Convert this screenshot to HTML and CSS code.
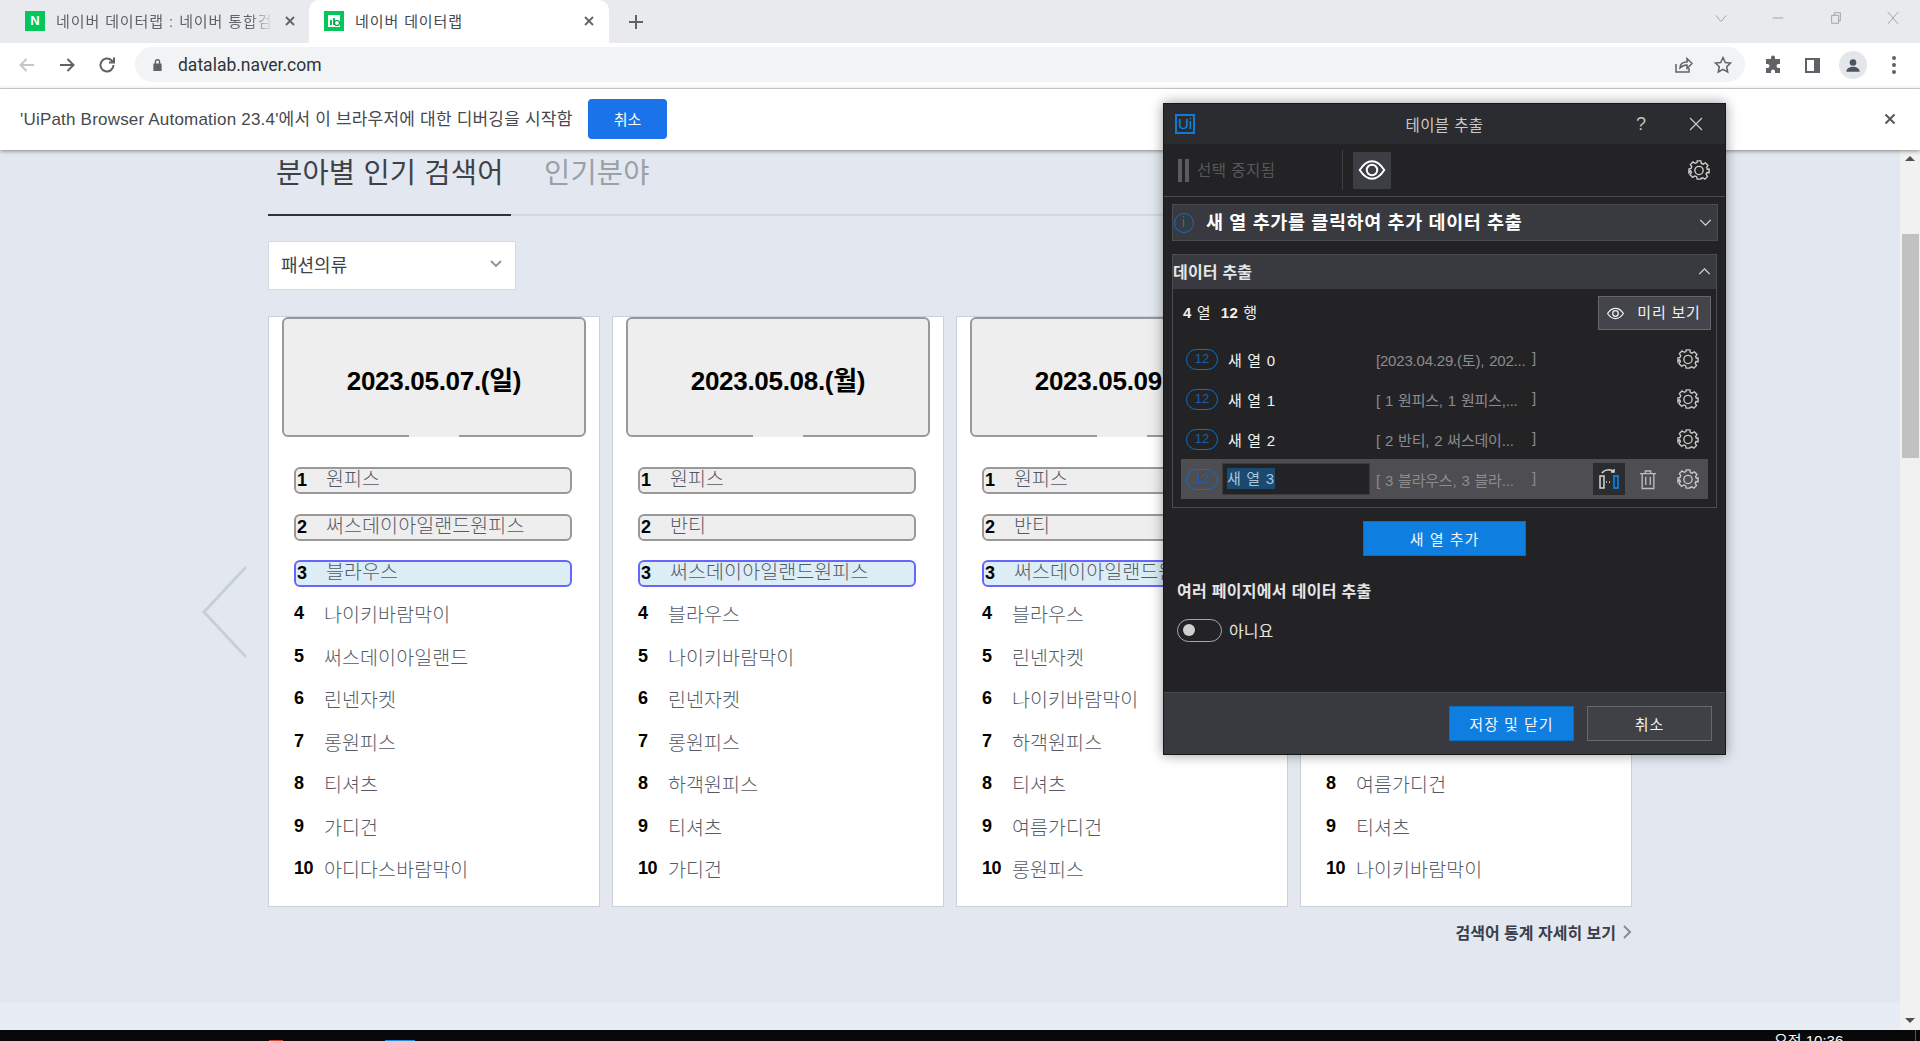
FILE: index.html
```html
<!DOCTYPE html>
<html lang="ko">
<head>
  <meta charset="utf-8" />
  <title>네이버 데이터랩</title>
  <link rel="stylesheet" href="styles.css">
</head>
<body>
  <!-- browser chrome -->
  <div class="tabstrip">
    <div class="tab">
      <span class="favicon fav-n">N</span>
      <span class="tab-title">네이버 데이터랩 : 네이버 통합검색</span>
      <svg class="tab-x" viewBox="0 0 12 12"><path d="M2 2l8 8M10 2l-8 8"/></svg>
    </div>
    <div class="tab tab-active">
      <span class="favicon fav-d"><svg viewBox="0 0 20 20"><rect x="4" y="4" width="12" height="12" fill="#fff"/><rect x="6" y="9" width="2" height="5" fill="#03c75a"/><rect x="9" y="7" width="2" height="7" fill="#03c75a"/><circle cx="13" cy="12" r="2.5" fill="none" stroke="#03a04a" stroke-width="1.2"/></svg></span>
      <span class="tab-title">네이버 데이터랩</span>
      <svg class="tab-x" viewBox="0 0 12 12"><path d="M2 2l8 8M10 2l-8 8"/></svg>
    </div>
    <svg class="new-tab" viewBox="0 0 16 16"><path d="M8 1v14M1 8h14"/></svg>
    <div class="win-btns">
      <svg viewBox="0 0 16 16"><path d="M2 5l6 7 6-7"/></svg>
      <svg viewBox="0 0 16 16"><path d="M2 8h12"/></svg>
      <svg viewBox="0 0 16 16"><path d="M3 5h8v9H3zM6 5V2h7v9h-2"/></svg>
      <svg viewBox="0 0 16 16"><path d="M2 1l12 14M14 1L2 15"/></svg>
    </div>
  </div>

  <div class="toolbar">
    <svg class="tool-ic ic-off" viewBox="0 0 20 20"><path d="M17 10H4M9.500 4L3.500 10l6 6"/></svg>
    <svg class="tool-ic" viewBox="0 0 20 20"><path d="M3 10h13M10.500 4l6 6-6 6"/></svg>
    <svg class="tool-ic" viewBox="0 0 20 20"><path d="M16.500 10a6.500 6.500 0 1 1-2-4.700L17 7.500M17 2.500v5h-5"/></svg>
    <div class="omnibox">
      <svg class="lock" viewBox="0 0 12 16"><path d="M3 7V5a3 3 0 0 1 6 0v2h1.500v8h-9V7zM4.500 7h3V5a1.500 1.500 0 0 0-3 0z" fill-rule="evenodd"/></svg>
      <span class="url">datalab.naver.com</span>
      <svg class="omni-ic" viewBox="0 0 20 20"><path d="M3 9v8h13v-4M7 13c0-4 3-6 7-6V3.500l5 5-5 5V10c-3 0-5 1-7 3z"/></svg>
      <svg class="omni-ic" viewBox="0 0 20 20"><path d="M10 2.500l2.300 5 5.200.600-3.800 3.600 1 5.300-4.700-2.700-4.700 2.700 1-5.300L2.500 8.100l5.200-.600z"/></svg>
    </div>
    <svg class="ext-ic" viewBox="0 0 20 20"><path d="M8 2.500a2 2 0 0 1 4 0V4h5v5h-1.500a2 2 0 0 0 0 4H17v5h-5v-1.500a2 2 0 0 0-4 0V18H3v-5h1.500a2 2 0 0 0 0-4H3V4h5z"/></svg>
    <svg class="ext-ic" viewBox="0 0 20 20"><path fill-rule="evenodd" d="M3 3h15v15H3zM5 5v11h7V5z"/></svg>
    <span class="avatar"><svg viewBox="0 0 24 24"><circle cx="12" cy="9" r="4"/><path d="M4 20c0-4 4-6 8-6s8 2 8 6z"/></svg></span>
    <span class="kebab"><i></i><i></i><i></i></span>
  </div>

  <div class="infobar">
    <span class="info-text">'UiPath Browser Automation 23.4'에서 이 브라우저에 대한 디버깅을 시작함</span>
    <button class="info-cancel">취소</button>
    <svg class="info-x" viewBox="0 0 12 12"><path d="M1.500 1.500l9 9M10.500 1.500l-9 9"/></svg>
  </div>

  <!-- page -->
  <div class="viewport">
    <div class="page">
      <main class="content">
        <nav class="page-tabs">
          <a class="page-tab on">분아별 인기 검색어</a>
          <a class="page-tab">인기분야</a>
        </nav>
        <div class="select">
          <span>패션의류</span>
          <svg viewBox="0 0 12 8"><path d="M1 1l5 5 5-5"/></svg>
        </div>
        <div class="cards">
          <section class="card">
            <div class="date">2023.05.07.(일)</div>
            <ol class="ranks">
              <li class="hit"><b>1</b>원피스</li>
              <li class="hit"><b>2</b>써스데이아일랜드원피스</li>
              <li class="hit now"><b>3</b>블라우스</li>
              <li><b>4</b>나이키바람막이</li>
              <li><b>5</b>써스데이아일랜드</li>
              <li><b>6</b>린넨자켓</li>
              <li><b>7</b>롱원피스</li>
              <li><b>8</b>티셔츠</li>
              <li><b>9</b>가디건</li>
              <li><b>10</b>아디다스바람막이</li>
            </ol>
          </section>
          <section class="card">
            <div class="date">2023.05.08.(월)</div>
            <ol class="ranks">
              <li class="hit"><b>1</b>원피스</li>
              <li class="hit"><b>2</b>반티</li>
              <li class="hit now"><b>3</b>써스데이아일랜드원피스</li>
              <li><b>4</b>블라우스</li>
              <li><b>5</b>나이키바람막이</li>
              <li><b>6</b>린넨자켓</li>
              <li><b>7</b>롱원피스</li>
              <li><b>8</b>하객원피스</li>
              <li><b>9</b>티셔츠</li>
              <li><b>10</b>가디건</li>
            </ol>
          </section>
          <section class="card">
            <div class="date">2023.05.09.(화)</div>
            <ol class="ranks">
              <li class="hit"><b>1</b>원피스</li>
              <li class="hit"><b>2</b>반티</li>
              <li class="hit now"><b>3</b>써스데이아일랜드원피스</li>
              <li><b>4</b>블라우스</li>
              <li><b>5</b>린넨자켓</li>
              <li><b>6</b>나이키바람막이</li>
              <li><b>7</b>하객원피스</li>
              <li><b>8</b>티셔츠</li>
              <li><b>9</b>여름가디건</li>
              <li><b>10</b>롱원피스</li>
            </ol>
          </section>
          <section class="card">
            <div class="date">2023.05.10.(수)</div>
            <ol class="ranks">
              <li class="hit"><b>1</b>원피스</li>
              <li class="hit"><b>2</b>반티</li>
              <li class="hit now"><b>3</b>블라우스</li>
              <li><b>4</b>린넨자켓</li>
              <li><b>5</b>롱원피스</li>
              <li><b>6</b>하객원피스</li>
              <li><b>7</b>가디건</li>
              <li><b>8</b>여름가디건</li>
              <li><b>9</b>티셔츠</li>
              <li><b>10</b>나이키바람막이</li>
            </ol>
          </section>
        </div>
        <a class="more">검색어 통계 자세히 보기 <svg viewBox="0 0 8 14"><path d="M1 1l6 6-6 6"/></svg></a>
      </main>
      <svg class="prev" viewBox="0 0 46 94"><path d="M45 1L2 47l43 46"/></svg>
      <div class="page-foot"></div>
    </div>
    <div class="scrollbar">
      <span class="arrow-up"></span>
      <span class="thumb"></span>
      <span class="arrow-down"></span>
    </div>
  </div>

  <div class="taskbar">
    <span class="task-red"></span>
    <span class="task-blue"></span>
    <span class="clock">오전 10:36</span>
    <span class="task-edge"></span>
  </div>

  <!-- UiPath dialog -->
  <div class="dialog">
    <header class="dlg-title">
      <span class="ui-logo">Ui</span>
      <span class="dlg-name">테이블 추출</span>
      <span class="dlg-help">?</span>
      <svg class="dlg-x" viewBox="0 0 14 14"><path d="M1 1l12 12M13 1L1 13"/></svg>
    </header>
    <div class="dlg-tools">
      <span class="pause"><i></i><i></i></span>
      <span class="paused-text">선택 중지됨</span>
      <span class="eye-btn">
        <svg viewBox="0 0 24 24"><path d="M1.500 12C5 6.500 8.500 4.500 12 4.500s7 2 10.500 7.500c-3.500 5.500-7 7.500-10.500 7.500S5 17.500 1.500 12z"/><circle cx="12" cy="12" r="4.500"/></svg>
      </span>
      <svg class="gear gear-top" viewBox="0 0 24 24"><use href="#gear"/></svg>
    </div>
    <div class="info-row">
      <span class="info-dot">i</span>
      <strong>새 열 추가를 클릭하여 추가 데이터 추출</strong>
      <svg class="chev" viewBox="0 0 14 8"><path d="M1 1l6 6 6-6"/></svg>
    </div>
    <div class="panel">
      <div class="panel-head">
        <span>데이터 추출</span>
        <svg class="chev" viewBox="0 0 14 8"><path d="M1 7l6-6 6 6"/></svg>
      </div>
      <div class="panel-sum">
        <span class="counts"><b>4</b> 열 &nbsp;<b>12</b> 행</span>
        <button class="preview">
          <svg viewBox="0 0 24 24"><path d="M2 12c3-4.500 6.500-6.500 10-6.500S19 7.500 22 12c-3 4.500-6.500 6.500-10 6.500S5 16.500 2 12z"/><circle cx="12" cy="12" r="3.500"/></svg>
          미리 보기
        </button>
      </div>
      <div class="col-row">
        <span class="count-pill">12</span>
        <span class="col-name">새 열 0</span>
        <span class="col-sample"><span>[2023.04.29.(토), 202...</span><span>]</span></span>
        <svg class="gear" viewBox="0 0 24 24"><use href="#gear"/></svg>
      </div>
      <div class="col-row">
        <span class="count-pill">12</span>
        <span class="col-name">새 열 1</span>
        <span class="col-sample"><span>[ 1 원피스, 1 원피스,...</span><span>]</span></span>
        <svg class="gear" viewBox="0 0 24 24"><use href="#gear"/></svg>
      </div>
      <div class="col-row">
        <span class="count-pill">12</span>
        <span class="col-name">새 열 2</span>
        <span class="col-sample"><span>[ 2 반티, 2 써스데이...</span><span>]</span></span>
        <svg class="gear" viewBox="0 0 24 24"><use href="#gear"/></svg>
      </div>
      <div class="col-row col-edit">
        <span class="count-pill">12</span>
        <span class="col-input"><mark>새 열 3</mark></span>
        <span class="col-sample"><span>[ 3 블라우스, 3 블라...</span><span>]</span></span>
        <span class="map-btn">
          <svg viewBox="0 0 24 24"><path class="m1" d="M3 9h4v12H3z"/><path class="m2" d="M17 9h4v12h-4z"/><path class="m1" d="M9 15h1M12 15h1M5 6c3-4 9-4 12-1M17 2v3h-3"/></svg>
        </span>
        <svg class="trash" viewBox="0 0 20 22"><path d="M1 4.500h18M7 4.500V1.500h6v3M3.500 4.500V21h13V4.500M7.500 8v9M12.500 8v9"/></svg>
        <svg class="gear" viewBox="0 0 24 24"><use href="#gear"/></svg>
      </div>
    </div>
    <div class="add-wrap"><button class="btn-blue add-col">새 열 추가</button></div>
    <div class="multi-title">여러 페이지에서 데이터 추출</div>
    <div class="toggle-row"><span class="toggle"></span>아니요</div>
    <footer class="dlg-foot">
      <button class="btn-blue save">저장 및 닫기</button>
      <button class="btn-dark">취소</button>
    </footer>
  </div>

  <svg class="defs" width="0" height="0">
    <symbol id="gear" viewBox="0 0 24 24">
      <path d="M10 2h4l.6 2.800 1.900.8 2.400-1.500 2.900 2.900-1.500 2.400.8 1.900L23 11v4l-2.400-.2-.8 1.900 1.500 2.400-2.900 2.900-2.400-1.500-1.900.8L14 22h-4l-.6-2.700-1.900-.8-2.400 1.500-2.900-2.900 1.500-2.400-.8-1.900L1 15v-4l2.300-.6.800-1.900-1.500-2.400 2.900-2.900 2.400 1.500 1.900-.8z"/>
      <circle cx="12" cy="12.500" r="4.500"/>
    </symbol>
  </svg>
</body>
</html>
```

FILE: styles.css
```css
:root {
  --kr: "Liberation Sans", "Noto Sans CJK KR", sans-serif;
  --chrome-bg: #e8eaed;
  --page-bg: #e3e8f0;
  --dlg-bg: #232326;
  --dlg-head: #383a3f;
  --dlg-line: #4b4d52;
  --blue: #0e7fe1;
}
* { box-sizing: border-box; }
html, body { height: 100%; }
body {
  margin: 0;
  height: 1041px;
  overflow: hidden;
  display: flex;
  flex-direction: column;
  font-family: var(--kr);
  background: var(--page-bg);
  position: relative;
}

/* tab strip */
.tabstrip {
  height: 43px;
  background: var(--chrome-bg);
  display: flex;
  align-items: stretch;
  flex: none;
}
.tab {
  width: 309px;
  padding: 0 13px 2px 25px;
  display: flex;
  align-items: center;
  gap: 11px;
  font-size: 15px;
  color: #5f6368;
}
.tab-active {
  width: 300px;
  padding: 0 14px 2px 15px;
  background: #fff;
  border-radius: 10px 10px 0 0;
  color: #45494e;
}
.favicon {
  width: 20px;
  height: 20px;
  flex: none;
  display: flex;
  align-items: center;
  justify-content: center;
}
.fav-n {
  background: #03c75a;
  color: #fff;
  font: bold 13px "Liberation Sans", sans-serif;
}
.fav-d { background: #03c75a; }
.fav-d svg { width: 20px; height: 20px; }
.tab-title {
  flex: 1;
  overflow: hidden;
  white-space: nowrap;
  letter-spacing: .9px;
  mask-image: linear-gradient(to left, transparent 0, #000 24px);
}
.tab-active .tab-title { mask-image: none; }
.tab-x { width: 12px; height: 12px; flex: none; }
.tab-x path { stroke: #5f6368; stroke-width: 1.800; fill: none; }
.new-tab { width: 16px; height: 16px; align-self: center; margin-left: 19px; }
.new-tab path { stroke: #5f6368; stroke-width: 2; fill: none; }
.win-btns {
  margin-left: auto;
  width: 206px;
  padding-right: 20px;
  display: flex;
  align-items: center;
  justify-content: space-between;
}
.win-btns svg { width: 14px; height: 14px; margin-top: -7px; }
.win-btns path { stroke: #9a9ca0; stroke-width: 1; fill: none; }

/* toolbar */
.toolbar {
  height: 46px;
  flex: none;
  background: #fff;
  border-bottom: 1px solid #d9dadc;
  display: flex;
  align-items: center;
  padding: 0 18px 2px 17px;
}
.tool-ic { width: 20px; height: 20px; margin-right: 20px; fill: none; }
.tool-ic path { stroke: #5f6368; stroke-width: 2; fill: none; }
.ic-off path { stroke: #c3c5c8; }
.omnibox {
  width: 1610px;
  height: 35px;
  margin: 0 18px 0 -2px;
  flex: none;
  background: #f1f3f4;
  border-radius: 18px;
  display: flex;
  align-items: center;
  padding: 0 12px 0 17px;
}
.lock { width: 11px; height: 15px; fill: #5f6368; margin-right: 15px; }
.url {
  flex: 1;
  font: 17.500px Roboto, sans-serif;
  color: #303338;
}
.omni-ic { width: 20px; height: 20px; margin-left: 20px; }
.omni-ic path { stroke: #5f6368; stroke-width: 1.500; fill: none; }
.ext-ic { width: 20px; height: 20px; fill: #5f6368; margin-right: 19px; }
.avatar {
  width: 28px;
  height: 28px;
  margin-left: -2px;
  margin-right: 25px;
  border-radius: 50%;
  background: #e4e6ea;
  display: flex;
  align-items: center;
  justify-content: center;
}
.avatar svg { width: 20px; height: 20px; fill: #4d5564; }
.kebab { display: flex; flex-direction: column; gap: 3px; }
.kebab i { width: 4px; height: 4px; border-radius: 50%; background: #5f6368; }

/* debugging bar */
.infobar {
  height: 61px;
  flex: none;
  background: #fff;
  display: flex;
  align-items: center;
  padding: 0 20px 2px;
  box-shadow: 0 1px 4px rgba(60, 64, 67, .6);
  position: relative;
  z-index: 2;
}
.info-text { font-size: 17px; color: #46494e; width: 568px; letter-spacing: .2px; white-space: nowrap; padding-bottom: 2px; }
.info-cancel {
  width: 79px;
  height: 40px;
  border: 0;
  border-radius: 4px;
  background: #1a73e8;
  color: #fff;
  font: 15px var(--kr);
}
.info-x { width: 12px; height: 12px; margin-left: auto; margin-right: 4px; }
.info-x path { stroke: #55585c; stroke-width: 2; fill: none; }

/* page */
.viewport { flex: 1; display: flex; min-height: 0; }
.page {
  flex: 1;
  min-width: 0;
  display: flex;
  flex-direction: column;
  position: relative;
}
.content { flex: 1; padding: 0 0 0 268px; overflow: hidden; }
.page-tabs {
  width: 1363px;
  height: 66px;
  display: flex;
  border-bottom: 2px solid #d3d8e0;
}
.page-tab {
  font-size: 28.500px;
  line-height: 46px;
  color: #9aa0a6;
  height: 66px;
  padding: 0 8px;
  letter-spacing: .2px;
  white-space: nowrap;
}
.page-tab.on { color: #3e4148; border-bottom: 2px solid #303338; margin-right: 25px; width: 243px; }
.select {
  width: 248px;
  height: 49px;
  margin-top: 25px;
  padding: 0 13px 3px 12px;
  background: #fff;
  border: 1px solid #d5dae2;
  display: flex;
  align-items: center;
  justify-content: space-between;
  font-size: 18px;
  color: #3e4148;
}
.select svg { width: 12px; height: 8px; }
.select path { stroke: #8e9094; stroke-width: 1.800; fill: none; }
.cards { display: flex; gap: 12px; margin-top: 26px; }
.card {
  width: 332px;
  height: 591px;
  flex: none;
  background: #fff;
  border: 1px solid #c9d0da;
  padding: 0 13px;
}
.date {
  height: 120px;
  background: #eee;
  border: 2px solid #999;
  border-radius: 6px;
  display: flex;
  align-items: center;
  justify-content: center;
  padding-top: 3px;
  font-weight: bold;
  font-size: 26px;
  letter-spacing: -.3px;
  color: #000;
  position: relative;
}
.date::after {
  content: "";
  position: absolute;
  left: 125px;
  bottom: -2px;
  width: 50px;
  height: 2px;
  background: #eee;
}
.ranks { list-style: none; margin: 30px 0 0; padding: 0 0 0 12px; width: 290px; }
.ranks li {
  height: 42.500px;
  width: 278px;
  display: flex;
  align-items: center;
  font-size: 19.500px;
  color: #555a66;
  font-weight: 300;
  letter-spacing: .1px;
  white-space: nowrap;
}
.ranks b {
  width: 30px;
  flex: none;
  color: #000;
  font-weight: bold;
  font-size: 18px;
  letter-spacing: -.4px;
}
.ranks .hit {
  height: 27px;
  margin-bottom: 19.500px;
  border: 2px solid #999;
  border-radius: 6px;
  background: #eee;
  padding: 0 0 6px 1px;
}
.ranks .hit b { width: 29px; padding-top: 6px; }
.ranks .now {
  border-color: #6666ff;
  background: #dcedf5;
  margin-bottom: 5.500px;
}
.more {
  display: flex;
  align-items: center;
  justify-content: flex-end;
  gap: 7px;
  width: 1363px;
  margin-top: 13px;
  font-size: 16px;
  font-weight: bold;
  color: #3b3e4a;
}
.more svg { width: 8px; height: 14px; }
.more path { stroke: #8a8d96; stroke-width: 2; fill: none; }
.prev { position: absolute; left: 202px; top: 416px; width: 45px; height: 92px; }
.prev path { stroke: #c5cfd7; stroke-width: 3; fill: none; }
.page-foot { height: 27px; flex: none; background: #e8ecf4; }

/* scrollbar */
.scrollbar {
  width: 20px;
  flex: none;
  background: #f1f1f1;
  position: relative;
}
.thumb {
  position: absolute;
  top: 84px;
  left: 2px;
  width: 17px;
  height: 224px;
  background: #c1c1c1;
}
.arrow-up, .arrow-down {
  position: absolute;
  left: 5px;
  border: 5px solid transparent;
}
.arrow-up { top: 6px; border-bottom-color: #505050; border-top-width: 0; }
.arrow-down { bottom: 7px; border-top-color: #505050; border-bottom-width: 0; }

.taskbar {
  height: 11px;
  flex: none;
  background: #070809;
  overflow: hidden;
  position: relative;
}
.clock {
  position: absolute;
  left: 1774px;
  top: 1px;
  color: #fff;
  font-size: 15px;
  line-height: 20px;
}
.task-red, .task-blue { position: absolute; bottom: 0; height: 1px; }
.task-red { left: 269px; width: 14px; background: #d8432f; }
.task-blue { left: 385px; width: 30px; background: #1a8fe8; }
.task-edge { position: absolute; left: 1915px; top: 0; width: 1px; height: 11px; background: #555; }

/* UiPath dialog */
.dialog {
  position: absolute;
  left: 1163px;
  top: 103px;
  width: 563px;
  height: 652px;
  z-index: 5;
  background: var(--dlg-bg);
  border: 1px solid #17181a;
  box-shadow: 0 0 12px rgba(0, 0, 0, .4);
  display: flex;
  flex-direction: column;
  color: #e6e6e6;
}
.dlg-title {
  height: 40px;
  flex: none;
  background: #2b2c30;
  display: flex;
  align-items: center;
  padding: 0 22px 0 11px;
  position: relative;
}
.ui-logo {
  width: 20px;
  height: 20px;
  border: 2px solid #0f7ad8;
  color: #0f8ae8;
  font-size: 15px;
  line-height: 16px;
  text-align: center;
}
.dlg-name {
  position: absolute;
  left: 0;
  right: 0;
  text-align: center;
  font-size: 15.500px;
  color: #c9cacb;
  letter-spacing: .4px;
}
.dlg-help { margin-left: auto; margin-right: 43px; font-size: 18px; color: #bfc0c2; }
.dlg-x { width: 14px; height: 14px; }
.dlg-x path { stroke: #c9cacb; stroke-width: 1.200; fill: none; }
.dlg-tools {
  height: 53px;
  flex: none;
  border-bottom: 1px solid var(--dlg-line);
  display: flex;
  align-items: center;
  padding: 0 15px 0 14px;
}
.pause { display: flex; gap: 3px; }
.pause i { width: 4px; height: 23px; background: #5a5c60; }
.paused-text {
  width: 154px;
  padding-left: 8px;
  margin-right: 10px;
  height: 40px;
  line-height: 42px;
  border-right: 1px solid #3f4044;
  font-size: 15.500px;
  color: #56585c;
  letter-spacing: .5px;
  white-space: nowrap;
}
.eye-btn {
  width: 38px;
  height: 37px;
  background: #3c3e43;
  display: flex;
  align-items: center;
  justify-content: center;
}
.eye-btn svg { width: 28px; height: 28px; stroke: #fff; stroke-width: 1.700; fill: none; }
.gear { width: 22px; height: 22px; stroke: #c8c8c8; stroke-width: 1.500; fill: none; flex: none; }
.gear-top { margin-left: auto; stroke: #d0d0d0; }
.info-row {
  height: 37px;
  margin: 7px 7px 13px 8px;
  flex: none;
  background: var(--dlg-head);
  border: 1px solid var(--dlg-line);
  display: flex;
  align-items: center;
  padding: 0 5px 0 1px;
  font-size: 18.500px;
  color: #fff;
  letter-spacing: .6px;
}
.info-row strong { padding-bottom: 4px; }
.info-dot {
  width: 20px;
  height: 20px;
  margin-right: 12px;
  border: 1.500px solid #0f6fc8;
  border-radius: 50%;
  color: #0f6fc8;
  font-size: 14px;
  line-height: 17px;
  text-align: center;
  font-weight: normal;
}
.chev { width: 13px; height: 7px; margin-left: auto; flex: none; }
.chev path { stroke: #d4d4d4; stroke-width: 1.500; fill: none; }
.panel {
  margin: 0 8px;
  height: 254px;
  flex: none;
  border: 1px solid var(--dlg-line);
}
.panel-head {
  height: 34px;
  background: var(--dlg-head);
  display: flex;
  align-items: center;
  padding: 0 5px 2px 0;
  font-size: 16px;
  font-weight: bold;
  letter-spacing: .2px;
}
.panel-sum {
  display: flex;
  align-items: center;
  height: 34px;
  margin-top: 7px;
  padding: 0 5px 0 10px;
  font-size: 15px;
}
.counts { color: #f0f0f0; letter-spacing: .6px; padding-bottom: 4px; }
.preview {
  margin-left: auto;
  width: 113px;
  height: 34px;
  background: #43454a;
  border: 1px solid #65676c;
  color: #f0f0f0;
  font: 15px var(--kr);
  letter-spacing: .8px;
  display: flex;
  align-items: center;
  justify-content: center;
  gap: 12px;
  padding: 0 0 3px;
}
.preview svg { width: 19px; height: 19px; stroke: #f0f0f0; stroke-width: 1.600; fill: none; margin: 3px 0 0 -2px; }
.col-row {
  display: flex;
  align-items: center;
  justify-content: space-between;
  height: 40px;
  margin: 0 8px;
  padding: 0 9px 0 5px;
  font-size: 15px;
}
.panel-sum + .col-row { margin-top: 9px; }
.count-pill {
  width: 32px;
  height: 21px;
  flex: none;
  border: 1.500px solid #0e70c8;
  border-radius: 11px;
  color: #1f5ea8;
  font-size: 13px;
  line-height: 18px;
  text-align: center;
}
.col-name {
  width: 158px;
  flex: none;
  padding-left: 10px;
  color: #f2f2f2;
  letter-spacing: .7px;
}
.col-sample {
  width: 160px;
  flex: none;
  margin-right: auto;
  display: flex;
  justify-content: space-between;
  color: #8b8c8e;
  letter-spacing: -.2px;
  word-spacing: 1px;
  white-space: nowrap;
}
.col-edit { background: #4d4d52; }
.col-input {
  width: 148px;
  height: 32px;
  margin: 0 6px 0 4px;
  padding-left: 4px;
  background: #232326;
  border: 1px solid #3b3b40;
  line-height: 30px;
  flex: none;
}
.col-input mark { background: #1a4a70; color: #a9c5dc; letter-spacing: .7px; padding: 2px 0; }
.map-btn {
  width: 32px;
  height: 32px;
  background: #2b2c30;
  display: flex;
  align-items: center;
  justify-content: center;
  margin-right: 14px;
}
.map-btn svg { width: 24px; height: 24px; fill: none; }
.m1 { stroke: #d5d5d5; stroke-width: 1.500; }
.m2 { stroke: #0f7ad8; stroke-width: 1.800; }
.trash { width: 18px; height: 21px; margin-right: 20px; stroke: #bdbdbd; stroke-width: 1.500; fill: none; flex: none; }
.add-wrap { display: flex; justify-content: center; margin-top: 13px; }
.btn-blue, .btn-dark {
  height: 35px;
  font: 15px var(--kr);
  color: #f4f4f4;
  letter-spacing: 1px;
}
.btn-blue { background: var(--blue); border: 1px solid #0a6cc4; }
.add-col { width: 163px; }
.multi-title {
  margin: 26px 0 0 13px;
  font-size: 16px;
  font-weight: bold;
  line-height: 20px;
  letter-spacing: .3px;
}
.toggle-row {
  display: flex;
  align-items: center;
  gap: 7px;
  margin: 16px 0 0 13px;
  font-size: 16px;
}
.toggle {
  width: 45px;
  height: 23px;
  border: 1.500px solid #a8a8a8;
  border-radius: 12px;
  position: relative;
}
.toggle::before {
  content: "";
  position: absolute;
  left: 5px;
  top: 4px;
  width: 12px;
  height: 12px;
  border-radius: 50%;
  background: #cfcfcf;
}
.dlg-foot {
  margin-top: auto;
  height: 62px;
  flex: none;
  background: var(--dlg-head);
  border-top: 1px solid var(--dlg-line);
  display: flex;
  align-items: center;
  justify-content: flex-end;
  gap: 13px;
  padding: 0 13px 1px 0;
}
.save { width: 125px; }
.btn-dark { width: 125px; background: #3f4146; border: 1px solid #66686d; }
.defs { position: absolute; }
```
